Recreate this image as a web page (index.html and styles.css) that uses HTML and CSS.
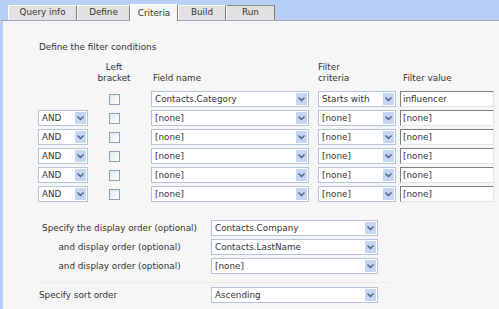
FILE: index.html
```html
<!DOCTYPE html>
<html lang="en">
<head>
    <meta charset="UTF-8">
    <title>Query criteria</title>
    <link rel="stylesheet" href="styles.css">
</head>
<body>
    <div class="tabbar">
        <div class="tab tab-query">Query info</div>
        <div class="tab tab-define">Define</div>
        <div class="tab tab-criteria active">Criteria</div>
        <div class="tab tab-build">Build</div>
        <div class="tab tab-run">Run</div>
    </div>

    <div class="panel">
        <p class="section-title">Define the filter conditions</p>

        <div class="criteria-grid">
            <div class="hdr"></div>
            <div class="hdr hdr-center">Left<br>bracket</div>
            <div class="hdr hdr-field">Field name</div>
            <div class="hdr">Filter<br>criteria</div>
            <div class="hdr hdr-value">Filter value</div>

            <div></div>
            <div class="cell-center"><span class="check"></span></div>
            <div class="cell-field"><div class="select w-field"><span class="val">Contacts.Category</span><span class="btn"></span></div></div>
            <div><div class="select w-crit"><span class="val">Starts with</span><span class="btn"></span></div></div>
            <div><div class="textbox">influencer</div></div>

            <div><div class="select w-and"><span class="val">AND</span><span class="btn"></span></div></div>
            <div class="cell-center"><span class="check"></span></div>
            <div class="cell-field"><div class="select w-field"><span class="val">[none]</span><span class="btn"></span></div></div>
            <div><div class="select w-crit"><span class="val">[none]</span><span class="btn"></span></div></div>
            <div><div class="textbox">[none]</div></div>

            <div><div class="select w-and"><span class="val">AND</span><span class="btn"></span></div></div>
            <div class="cell-center"><span class="check"></span></div>
            <div class="cell-field"><div class="select w-field"><span class="val">[none]</span><span class="btn"></span></div></div>
            <div><div class="select w-crit"><span class="val">[none]</span><span class="btn"></span></div></div>
            <div><div class="textbox">[none]</div></div>

            <div><div class="select w-and"><span class="val">AND</span><span class="btn"></span></div></div>
            <div class="cell-center"><span class="check"></span></div>
            <div class="cell-field"><div class="select w-field"><span class="val">[none]</span><span class="btn"></span></div></div>
            <div><div class="select w-crit"><span class="val">[none]</span><span class="btn"></span></div></div>
            <div><div class="textbox">[none]</div></div>

            <div><div class="select w-and"><span class="val">AND</span><span class="btn"></span></div></div>
            <div class="cell-center"><span class="check"></span></div>
            <div class="cell-field"><div class="select w-field"><span class="val">[none]</span><span class="btn"></span></div></div>
            <div><div class="select w-crit"><span class="val">[none]</span><span class="btn"></span></div></div>
            <div><div class="textbox">[none]</div></div>

            <div><div class="select w-and"><span class="val">AND</span><span class="btn"></span></div></div>
            <div class="cell-center"><span class="check"></span></div>
            <div class="cell-field"><div class="select w-field"><span class="val">[none]</span><span class="btn"></span></div></div>
            <div><div class="select w-crit"><span class="val">[none]</span><span class="btn"></span></div></div>
            <div><div class="textbox">[none]</div></div>
        </div>

        <div class="order-grid">
            <div class="order-label">Specify the display order (optional)</div>
            <div class="select w-order"><span class="val">Contacts.Company</span><span class="btn"></span></div>
            <div class="order-label">and display order (optional)</div>
            <div class="select w-order"><span class="val">Contacts.LastName</span><span class="btn"></span></div>
            <div class="order-label">and display order (optional)</div>
            <div class="select w-order"><span class="val">[none]</span><span class="btn"></span></div>
        </div>

        <div class="sort-row">
            <div class="sort-label">Specify sort order</div>
            <div class="select w-order"><span class="val">Ascending</span><span class="btn"></span></div>
        </div>
    </div>
</body>
</html>
```

FILE: styles.css
```css
* {
    box-sizing: border-box;
    margin: 0;
    padding: 0;
}
body {
    font-family: "DejaVu Sans", Verdana, sans-serif;
    font-size: 8.8px;
    line-height: 11px;
    color: #333;
    background-color: #b7cff4;
    height: 309px;
    overflow: hidden;
}

/* Tabs */
.tabbar {
    display: flex;
    align-items: flex-end;
    height: 20px;
    padding-left: 8px;
}
.tab {
    height: 15px;
    line-height: 13px;
    text-align: center;
    background-color: #e2e2e2;
    border: 1px solid #fdfdfd;
    border-right-color: #7c7c7c;
    border-bottom: none;
    color: #333;
}
.tab.active {
    height: 17px;
    background-color: #f6f6f6;
    margin-bottom: -1px;
    position: relative;
    z-index: 1;
    line-height: 16px;
}
.tab-query { width: 69px; }
.tab-define { width: 53px; }
.tab-criteria { width: 48px; }
.tab-build { width: 48px; }
.tab-run { width: 49px; border-top-color: #8c8c8c; }

/* Panel */
.panel {
    background-color: #f6f6f6;
    border-left: 3px solid #b7cff4;
    border-top: 1px solid #9aa4b6;
    height: 289px;
    padding: 21px 0 0 35px;
}
.section-title {
    margin-left: 1px;
    margin-bottom: 9px;
}

/* Criteria rows */
.criteria-grid {
    display: grid;
    grid-template-columns: 50px 52px 178px 82px 94px;
    row-gap: 3px;
    align-items: center;
}
.hdr {
    align-self: end;
    margin-bottom: 4px;
}
.hdr-center { text-align: center; }
.hdr-field { padding-left: 13px; }
.hdr-value { padding-left: 3px; }
.cell-center {
    display: flex;
    justify-content: center;
}
.cell-field { padding-left: 11px; }

.check {
    display: block;
    width: 11px;
    height: 11px;
    border: 1px solid #8d9db6;
    background: linear-gradient(135deg, #e4e8ee, #ffffff);
}

.select {
    display: flex;
    height: 16px;
    border: 1px solid #b4c2d8;
    background-color: #fff;
}
.select .val {
    flex: 1;
    padding-left: 3px;
    line-height: 14px;
    white-space: nowrap;
    overflow: hidden;
}
.select .btn {
    width: 11px;
    margin: 1px;
    background-color: #c6d6f2;
    background-image: url("data:image/svg+xml;utf8,<svg xmlns='http://www.w3.org/2000/svg' width='7' height='5'><path d='M0.5 0.5 L3.5 3.5 L6.5 0.5' fill='none' stroke='%234a5f86' stroke-width='1.4'/></svg>");
    background-repeat: no-repeat;
    background-position: center;
}
.w-and { width: 50px; }
.w-field { width: 158px; }
.w-crit { width: 78px; }
.w-order { width: 167px; }

.textbox {
    height: 16px;
    width: 94px;
    padding-left: 2px;
    line-height: 14px;
    background-color: #fff;
    border: 1px solid #e4e4e4;
    border-top-color: #7f7f7f;
    border-left-color: #7f7f7f;
}

/* Display order */
.order-grid {
    display: grid;
    grid-template-columns: 172px 167px;
    row-gap: 3px;
    align-items: center;
    margin-top: 18px;
    margin-left: 1px;
    padding-bottom: 8px;
    border-bottom: 1px solid #ececec;
    width: 350px;
}
.order-label {
    text-align: center;
    padding-right: 11px;
}
.sort-row {
    display: grid;
    grid-template-columns: 172px 167px;
    align-items: center;
    margin-top: 4px;
    margin-left: 1px;
}
```
